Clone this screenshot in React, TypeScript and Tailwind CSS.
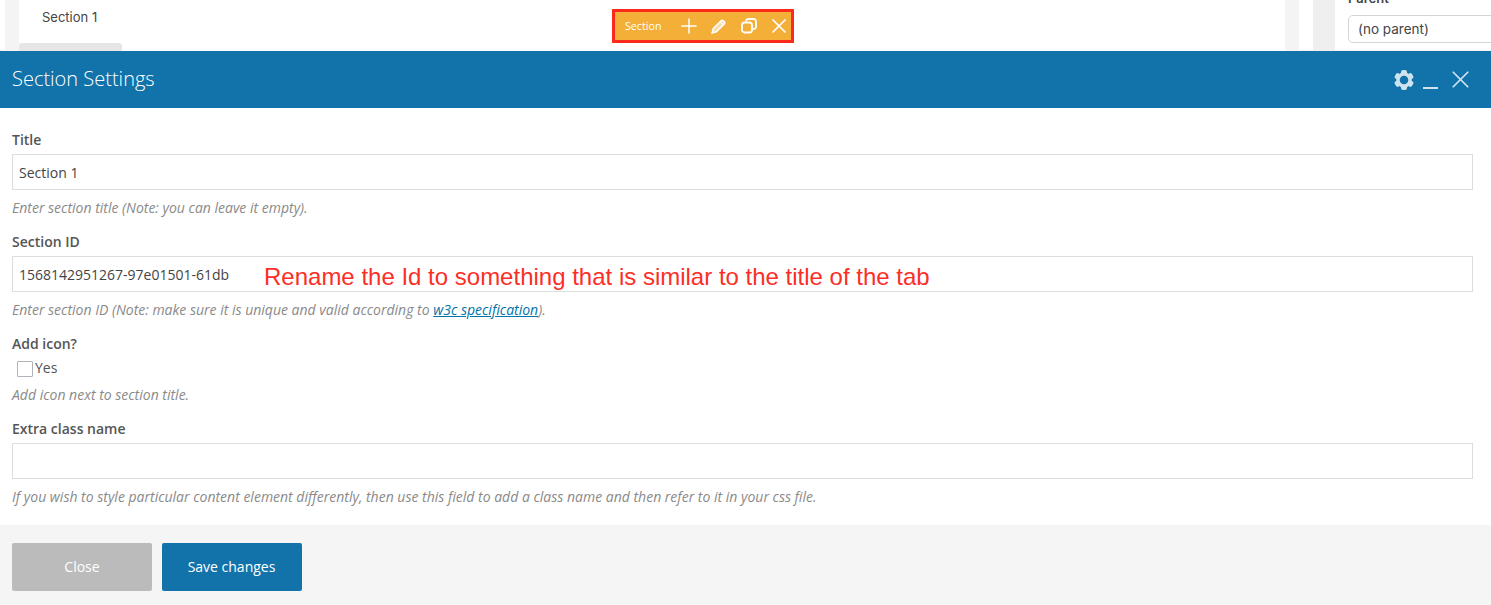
import React from "react";
import { Plus, X } from "lucide-react";

const os = "font-['Open_Sans',sans-serif]";

function Gear() {
  const teeth = [0, 60, 120, 180, 240, 300];
  return (
    <svg width="20" height="20" viewBox="0 0 20 20" fill="currentColor">
      {teeth.map((a) => (
        <rect key={a} x="7" y="0.1" width="6" height="5" rx="2" transform={`rotate(${a} 10 10)`} />
      ))}
      <circle cx="10" cy="10" r="6" fill="none" stroke="currentColor" strokeWidth="3.4" />
    </svg>
  );
}

function Field({ label, value, help, children }: { label: string; value?: string; help: React.ReactNode; children?: React.ReactNode }) {
  return (
    <div className="mb-[14px]">
      <div className="h-[20px] text-[14px] leading-[20px] font-semibold text-[#555] mb-[4px]">{label}</div>
      <div className="relative h-[36px] border border-[#dddddd] bg-white px-[6px] text-[14px] leading-[36px] text-[#444]">
        {value}
        {children}
      </div>
      <div className="mt-[8px] h-[20px] text-[14px] leading-[20px] italic text-[#8a8a8a] whitespace-nowrap">{help}</div>
    </div>
  );
}

export default function App() {
  return (
    <div className={`${os} w-[1491px] h-[605px] overflow-hidden bg-white flex flex-col`}>
      <div className="relative h-[51px] flex shrink-0 bg-white shadow-[inset_0_-1px_1px_rgba(0,0,0,0.06)]">
        <div className="w-[5px] shrink-0" />
        <div className="w-[14px] shrink-0 bg-[#f4f4f4]" />
        <div className="w-[1266px] shrink-0 bg-white">
          <div className="h-[43px] w-[103px] pl-[23px] pt-[8px] rounded-bl-[4px] bg-white text-[13px] leading-[18px] text-[#444] font-['Inter',sans-serif]">Section 1</div>
          <div className="h-[8px] w-[103px] bg-[#e6e6e6] rounded-t-[3px]" />
        </div>
        <div className="w-[14px] shrink-0 bg-[#f4f4f4]" />
        <div className="w-[14px] shrink-0" />
        <div className="w-[22px] shrink-0 bg-[#efefef]" />
        <div className="flex-1 relative pl-[13px] font-['Inter',sans-serif]">
          <div className="absolute left-[13px] top-[-9px] text-[13px] leading-[14px] font-semibold text-[#444]">Parent</div>
          <div className="mt-[15px] h-[28px] w-[170px] rounded-[5px] border border-[#d5d5d5] pl-[9px] text-[13.5px] leading-[26px] text-[#444]">(no parent)</div>
        </div>
        <div className="absolute left-[612px] top-[9px] w-[182px] h-[34px] border-[3px] border-[#fb2a1c] bg-[#f3af37] flex items-center text-white">
          <span className="ml-[10px] w-[38px] text-[10.7px] leading-none font-normal">Section</span>
          <Plus className="ml-[14px] shrink-0" size={24} strokeWidth={1.5} />
          <svg className="ml-[9px] shrink-0" width="17" height="17" viewBox="0 0 16 16" fill="none" stroke="currentColor">
            <path d="M2 14l1-4 7.5-7.5a1.4 1.4 0 0 1 2 0l1 1a1.4 1.4 0 0 1 0 2L6 13z" strokeWidth="1.4" fill="currentColor" fillOpacity="0.55" />
            <path d="M9.5 3.5l3 3" strokeWidth="1.1" />
          </svg>
          <svg className="ml-[14px] shrink-0" width="16" height="16" viewBox="0 0 16 16" fill="none" stroke="currentColor" strokeWidth="1.8">
            <rect x="1" y="4.5" width="10" height="10" rx="2.6" />
            <path d="M5 3.5V3.4A2.4 2.4 0 0 1 7.4 1h5.2A2.4 2.4 0 0 1 15 3.4v5.2a2.4 2.4 0 0 1-2.4 2.4h-.6" />
          </svg>
          <X className="ml-[10px] shrink-0" size={24} strokeWidth={1.7} />
        </div>
      </div>

      <div className="h-[57px] shrink-0 bg-[#1273aa] flex items-center pl-[12px] pr-[16px]">
        <div className="text-[20px] leading-[28px] text-white font-light pb-[2px]">Section Settings</div>
        <div className="ml-auto flex items-center text-[#cfe3ef]">
          <Gear />
          <div className="ml-[9px] mt-[17px] w-[15px] h-[2px] bg-[#cfe3ef]" />
          <X className="ml-[8px]" size={29} strokeWidth={1.4} />
        </div>
      </div>

      <div className="h-[417px] shrink-0 pl-[12px] pr-[18px] pt-[22px]">
        <Field label="Title" value="Section 1" help="Enter section title (Note: you can leave it empty)." />
        <Field
          label="Section ID"
          value="1568142951267-97e01501-61db"
          help={<>Enter section ID (Note: make sure it is unique and valid according to <a className="text-[#0073aa] underline font-medium">w3c specification</a>).</>}
        >
          <span className="absolute left-[251px] top-[4px] font-['Liberation_Sans',sans-serif] text-[24px] leading-[32px] text-[#fb2f28] whitespace-nowrap">
            Rename the Id to something that is similar to the title of the tab
          </span>
        </Field>
        <div className="mb-[14px]">
          <div className="h-[20px] text-[14px] leading-[20px] font-semibold text-[#555]">Add icon?</div>
          <div className="h-[20px] mt-[4px] flex items-center text-[14px] text-[#555] pl-[5px]">
            <span className="w-[16px] h-[16px] mt-[1px] border border-[#aeb4b9] rounded-[1px] bg-white mr-[2px]" />
            <span className="pb-[2px]">Yes</span>
          </div>
          <div className="mt-[7px] h-[20px] text-[14px] leading-[20px] italic text-[#8a8a8a]">Add icon next to section title.</div>
        </div>
        <Field label="Extra class name" help="If you wish to style particular content element differently, then use this field to add a class name and then refer to it in your css file." />
      </div>

      <div className="flex-1 bg-[#f5f5f5] pl-[12px] pt-[18px] flex gap-[10px]">
        <button className="w-[140px] h-[48px] rounded-[2px] bg-[#bbbbbb] text-white text-[14px] pb-[2px]">Close</button>
        <button className="w-[140px] h-[48px] rounded-[2px] bg-[#1273aa] text-white text-[14px] font-medium pb-[2px] pr-[1px]">Save changes</button>
      </div>
    </div>
  );
}
